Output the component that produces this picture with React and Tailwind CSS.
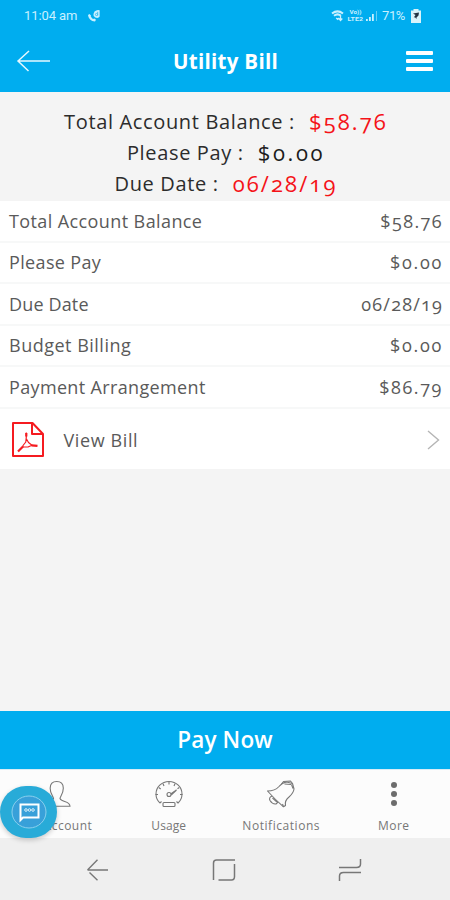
import React from "react";

const ROWS = [
  { label: "Total Account Balance", value: "$58.76", track: "tracking-[0.4px]", valueTrack: "tracking-[1.4px]" },
  { label: "Please Pay", value: "$0.00", track: "tracking-[0.35px]", valueTrack: "tracking-[1.7px]" },
  { label: "Due Date", value: "06/28/19", track: "tracking-[0.15px]", valueTrack: "tracking-[1.2px]" },
  { label: "Budget Billing", value: "$0.00", track: "tracking-[0.5px]", valueTrack: "tracking-[1.7px]" },
  { label: "Payment Arrangement", value: "$86.79", track: "tracking-[0.35px]", valueTrack: "tracking-[1.6px]" },
];

function StatusBar() {
  return (
    <div className="flex h-8 items-center pl-6 pr-[28px] text-[#c9f0ff] lining-nums">
      <span className="w-[53px] whitespace-nowrap font-[Roboto,sans-serif] text-[13px] leading-4 tracking-[-0.1px]">11:04 am</span>
      <svg className="ml-[10px]" width="14" height="14" viewBox="0 0 14 14" fill="currentColor">
        <path d="M1 6C1.5 9.5 4 12.5 8 12.5L9 10.8L7.4 9.6L6 10C5 9.4 4.2 8.5 3.7 7.3L4 6.5L2.5 5Z" />
        <path d="M7.5 2.5Q10 .2 12.6 1.2V7.5Q11.5 9.6 8.3 8.5Q6 7.4 6.5 5Z" />
        <path d="M10.7 2.8V6.6" stroke="#3bbcee" strokeWidth=".9" />
        <circle cx="9.5" cy="5.5" r="1.1" fill="none" stroke="#3bbcee" strokeWidth=".9" />
      </svg>
      <div className="ml-auto flex items-center">
        <svg width="47" height="14" viewBox="0 0 47 14">
          <g fill="none" stroke="currentColor">
            <path d="M1 4.5Q6.5 .2 12 4.5M3 6.8Q6.5 4 10 6.8" strokeWidth="2" />
            <path d="M5.2 9L6.7 10.4L8 9M9.5 7V11M8 9.5L9.5 11.5L11.3 9.5" strokeWidth="1.3" />
          </g>
          <g fill="currentColor" fontSize="5" fontWeight="700" fontFamily="Roboto, sans-serif">
            <text x="18.5" y="5.4" textLength="12" lengthAdjust="spacingAndGlyphs">Vo))</text>
            <text x="16.5" y="12.4" textLength="15.5" lengthAdjust="spacingAndGlyphs">LTE2</text>
          </g>
          <g fill="currentColor">
            <path d="M35 10h1.8v2H35zM38 8h1.8v4H38zM41 5h1.8v7H41z" />
            <path d="M45 2h1v10h-1z" opacity=".5" />
          </g>
        </svg>
        <span className="ml-[4px] w-6 whitespace-nowrap font-[Roboto,sans-serif] text-[13px] leading-4 tracking-[-0.4px]">71%</span>
        <svg className="ml-[4px]" width="12" height="16" viewBox="0 0 12 16">
          <path d="M3.5 1h5v1.5H11V15H1V2.5h2.5z" fill="#d9f3fb" />
          <path d="M3 5.5L9 4.5L8.5 7.5L6.5 9.5V11L5 9.2L3.8 9.5L5.5 7Z" fill="#234" />
        </svg>
      </div>
    </div>
  );
}

function Header() {
  return (
    <header className="h-[92px] shrink-0 bg-[#00adef]">
      <StatusBar />
      <div className="flex h-[58px] items-center justify-between pl-4 pr-[17px]">
        <svg width="36" height="22" viewBox="0 0 36 22" fill="none" stroke="#e4f8ff" strokeWidth="1.5">
          <path d="M13 1L2 11L12.5 21M2 11H34" />
        </svg>
        <h1 className="mr-[7px] whitespace-nowrap pb-px text-[20.5px] font-bold leading-6 tracking-[0.3px] text-white">Utility Bill</h1>
        <div className="flex w-[27px] flex-col gap-[4px]">
          <span className="h-[4px] rounded-[1px] bg-white" />
          <span className="h-[4px] rounded-[1px] bg-white" />
          <span className="h-[4px] rounded-[1px] bg-white" />
        </div>
      </div>
    </header>
  );
}

function SummaryLine({ label, value, color, track = "tracking-[2.1px]" }) {
  return (
    <div className="flex h-[31px] items-center justify-center whitespace-pre pl-[2px] text-[20px] tracking-[0.65px] text-[#2c2c2c]">
      <span>{label} :</span>
      <span className={"ml-[14px] text-[22px] " + track + " " + color}>{value}</span>
    </div>
  );
}

function Tab({ label, labelClass = "tracking-[0.4px]", children }) {
  return (
    <div className="flex w-[112.5px] flex-col items-center pt-[9px] text-[#777]">
      <div className="flex h-[30px] items-center">{children}</div>
      <span className={"mt-[9px] whitespace-nowrap text-[12px] leading-4 " + labelClass}>{label}</span>
    </div>
  );
}

export default function App() {
  return (
    <div className="relative flex h-[900px] w-[450px] flex-col overflow-hidden bg-[#f4f4f4] font-['Open_Sans','Noto_Sans',sans-serif] oldstyle-nums">
      <Header />
      <section className="h-[109px] shrink-0 pt-[14px]">
        <SummaryLine label="Total Account Balance" value="$58.76" color="text-[#f51218]" />
        <SummaryLine label="Please Pay" value="$0.00" color="text-[#1c1c1c]" track="tracking-[2.6px]" />
        <SummaryLine label="Due Date" value="06/28/19" color="text-[#f51218]" />
      </section>

      <section className="shrink-0 bg-white">
        {ROWS.map((row) => (
          <div key={row.label} className="flex h-[41.5px] items-center justify-between whitespace-nowrap border-b-2 border-[#f7f8f8] pl-[9px] pr-[7px] pt-px text-[18px] text-[#5a5a5a]">
            <span className={row.track}>{row.label}</span>
            <span className={row.valueTrack}>{row.value}</span>
          </div>
        ))}
        <div className="flex h-[60.5px] items-center pl-[11px] pr-[9px] pt-[3px] text-[#5a5a5a]">
          <svg width="34" height="36" viewBox="0 0 34 36" fill="none" stroke="#f51b20" strokeWidth="2" strokeLinejoin="round">
            <path d="M2 1H21.5L32 12V34H2Z" />
            <path d="M21 1V12H32" />
            <path d="M15.3 10.5V15L14.8 20L12 23.5L11.8 25H17L21 23.3L17.5 20.5L15.5 17" strokeWidth="1.2" />
            <path d="M15.3 11V14.5M20.5 23.3L26.5 23.9M12 24.5L7 29.5" strokeWidth="2.2" />
          </svg>
          <span className="ml-[18.5px] text-[18px] tracking-[0.6px]">View Bill</span>
          <svg className="ml-auto" width="15" height="20" viewBox="0 0 15 20" fill="none" stroke="#b5b5b5" strokeWidth="1.4">
            <path d="M2 1L12.5 10L2 19" />
          </svg>
        </div>
      </section>

      <button className="mt-auto h-[58px] shrink-0 bg-[#00adef] text-[22.5px] font-semibold tracking-[0.15px] text-white">Pay Now</button>

      <nav className="flex h-[69px] shrink-0 border-t border-[#d7ecf6] bg-[#fcfcfc]">
        <Tab label="My Account" labelClass="tracking-[0.5px] pl-[2px]">
          <svg className="ml-[2px]" width="28" height="28" viewBox="0 0 28 28" fill="none" stroke="#777" strokeWidth="1.1">
            <path d="M10.5 18.5C10.5 16.5 7 14 7.2 8C7.3 3.5 9.5 1.5 13.7 1.5S20.2 3.5 20.3 8C20.4 14 17 16.5 17 18.5C18.5 22.5 27 20.5 27 26.3H.5C.5 20.5 9 22.5 10.5 18.5Z" />
          </svg>
        </Tab>
        <Tab label="Usage" labelClass="tracking-[0.1px]">
          <svg width="30" height="28" viewBox="0 0 30 28" fill="none" stroke="#777" strokeWidth="1.1">
            <path d="M6 23A13 12.5 0 1 1 24 23L22.5 21.5M6 23L7.5 21.5" />
            <path d="M1.5 14.5H4M26 14.5H28.5M4.7 7.5L6.7 9M15 2V4.4M25.3 7.5L23.5 8.8M9 3.7L10 6M21 3.7L20 6" />
            <circle cx="15" cy="14.5" r="2" />
            <path d="M17 13.7L22.5 10L17.2 15" />
            <rect x="9" y="22.5" width="12" height="4" rx="1" />
          </svg>
        </Tab>
        <Tab label="Notifications" labelClass="tracking-[0.55px]">
          <svg width="30" height="28" viewBox="0 0 30 28" fill="none" stroke="#777" strokeWidth="1.1" strokeLinejoin="round">
            <path d="M1.5 11Q9 11 13 6.5Q16 2.8 20.5 2L26.5 3.5L28 9Q27.5 13 23 17Q18.5 20.5 19.5 25.5L17.5 26.8Q9 19.5 1.5 11Z" />
            <path d="M15.5 4.2L17.5 1.5L24.5 1L26.5 3.5M18.5 4L25 4.5M25.5 4.5L27 8.5M6 16Q2.5 17.5 4 20.5Q6.5 24.5 10 24L12 22.2M6.5 18L11.5 22.5M17.5 26.8L16.5 24" />
          </svg>
        </Tab>
        <Tab label="More">
          <div className="flex flex-col gap-[2.5px]">
            <span className="size-[6.5px] rounded-full bg-[#6c6c6c]" />
            <span className="size-[6.5px] rounded-full bg-[#6c6c6c]" />
            <span className="size-[6.5px] rounded-full bg-[#6c6c6c]" />
          </div>
        </Tab>
      </nav>

      <footer className="flex h-[62px] shrink-0 items-center justify-between bg-[#efefef] pb-px pt-[3px] pl-[86px] pr-[88px]">
        <svg width="23" height="22" viewBox="0 0 23 22" fill="none" stroke="#777" strokeWidth="1.4">
          <path d="M11.5 .8L1.5 11M3.5 13.5L11.5 21.2M1.5 11H22" />
        </svg>
        <svg width="24" height="22" viewBox="0 0 24 22" fill="none" stroke="#777" strokeWidth="1.5">
          <path d="M1.5 21V4Q1.5 1 4.5 1H23M22.5 5V17.5Q22.5 21 19.5 21H6.5" />
        </svg>
        <svg width="24" height="24" viewBox="0 0 24 24" fill="none" stroke="#777" strokeWidth="1.5">
          <path d="M1 9.5H18.5Q22.5 9.5 22.5 6V1M23 14.5H5.5Q1.5 14.5 1.5 18V23" />
        </svg>
      </footer>

      <button className="absolute left-0 top-[786px] flex h-[52px] w-[57px] items-center justify-center rounded-full bg-[#28abd8] shadow-[0_2px_5px_rgba(0,0,0,0.2)]">
        <svg width="36" height="34" viewBox="0 0 36 34" fill="none">
          <ellipse cx="18" cy="17" rx="17" ry="16" fill="#38a0d9" stroke="#8bd0ee" />
          <path d="M9.5 25V9.5H27.5V22.5H12Z" stroke="white" strokeWidth="2" />
          <circle cx="15" cy="15" r="1.3" stroke="#d7effa" />
          <circle cx="18.5" cy="15" r="1.3" stroke="#d7effa" />
          <circle cx="22" cy="15" r="1.3" stroke="#d7effa" />
        </svg>
      </button>
    </div>
  );
}
